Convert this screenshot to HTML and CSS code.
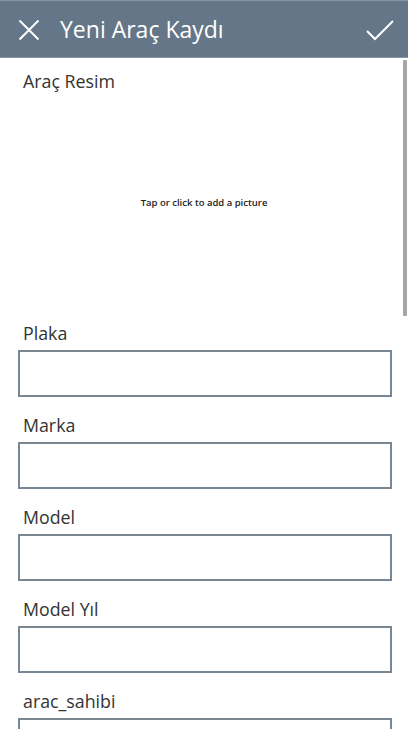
FILE: index.html
```html
<!DOCTYPE html>
<html lang="tr">
<head>
<meta charset="utf-8">
<title>Yeni Araç Kaydı</title>
<link rel="stylesheet" href="styles.css">
</head>
<body>
<div class="screen">
  <header class="bar">
    <svg class="icon close" width="22" height="22" viewBox="0 0 22 22" aria-hidden="true">
      <path d="M1.5 1.5 L20.5 20.5 M20.5 1.5 L1.5 20.5" stroke="#fff" stroke-width="2" fill="none"/>
    </svg>
    <h1 class="title">Yeni Araç Kaydı</h1>
    <svg class="icon check" width="28" height="22" viewBox="0 0 28 22" aria-hidden="true">
      <path d="M1 12 L9 20 L27 2" stroke="#fff" stroke-width="2" fill="none"/>
    </svg>
  </header>
  <main class="form">
    <section class="field image-field">
      <label class="label">Araç Resim</label>
      <div class="picture">Tap or click to add a picture</div>
    </section>
    <section class="field">
      <label class="label">Plaka</label>
      <div class="input"></div>
    </section>
    <section class="field">
      <label class="label">Marka</label>
      <div class="input"></div>
    </section>
    <section class="field">
      <label class="label">Model</label>
      <div class="input"></div>
    </section>
    <section class="field">
      <label class="label">Model Yıl</label>
      <div class="input"></div>
    </section>
    <section class="field">
      <label class="label">arac_sahibi</label>
      <div class="input"></div>
    </section>
  </main>
  <div class="scrollbar"></div>
</div>
</body>
</html>
```
FILE: styles.css
```css
html, body {
  margin: 0;
  padding: 0;
  background: #fff;
}
body {
  font-family: "Open Sans", "Noto Sans", sans-serif;
  width: 408px;
  height: 729px;
  overflow: hidden;
}
.screen {
  position: relative;
  width: 408px;
  height: 729px;
  overflow: hidden;
}
.bar {
  height: 56px;
  border-top: 1px solid #8796a3;
  background: #647687;
  display: flex;
  align-items: center;
  padding: 0 0 0 18px;
  border-bottom: 1px solid #8a97a3;
}
.icon.close {
  flex: none;
  margin-top: 2px;
}
.title {
  margin: 0 0 0 20px;
  font-weight: 400;
  font-size: 23px;
  color: #fff;
  flex: 1;
  line-height: 30px;
}
.icon.check {
  flex: none;
  margin-right: 14px;
  margin-top: 2px;
}
.form {
  display: flex;
  flex-direction: column;
  gap: 16px;
  padding: 11px 16px 0 18px;
}
.field {
  display: flex;
  flex-direction: column;
  gap: 5px;
}
.label {
  display: block;
  padding-left: 5px;
  font-size: 17.8px;
  line-height: 24px;
  color: #333;
}
.picture {
  height: 212px;
  display: flex;
  align-items: center;
  justify-content: center;
  font-size: 9.5px;
  font-weight: 600;
  color: #222;
  margin-top: -5px;
  padding-top: 7px;
  box-sizing: border-box;
  padding-right: 2px;
}
.input {
  height: 43px;
  border: 2px solid #7a8793;
  background: #fff;
}
.scrollbar {
  position: absolute;
  right: 1px;
  top: 60px;
  width: 4px;
  height: 256px;
  background: #a6a6a6;
  border-radius: 1px;
}
```
